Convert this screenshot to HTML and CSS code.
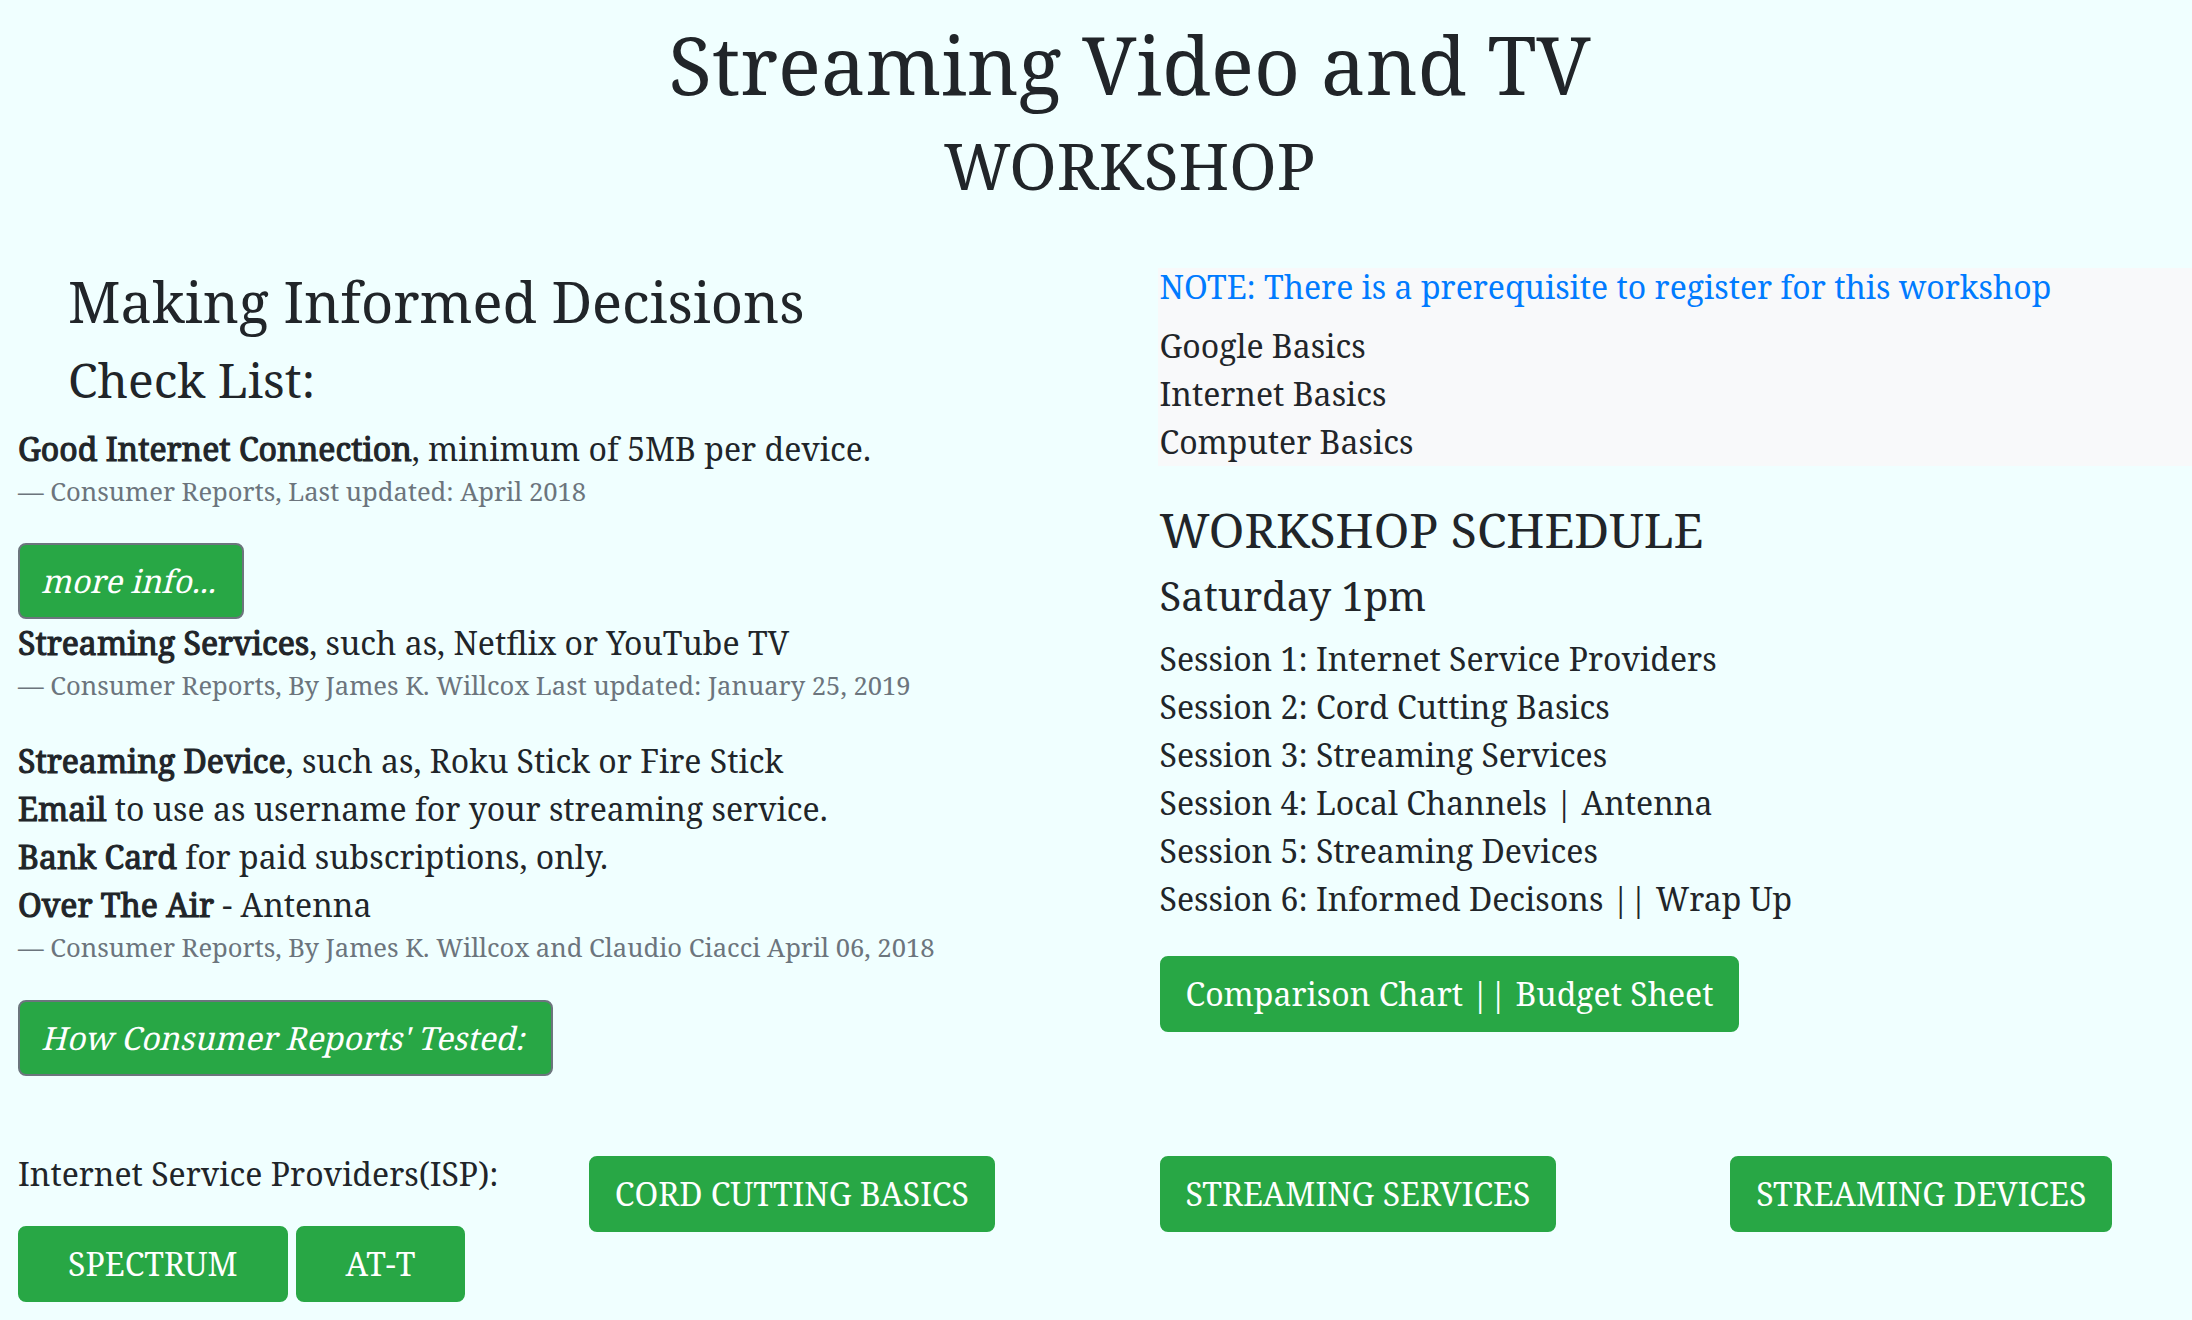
FILE: index.html
```html
<!DOCTYPE html>
<html lang="en">
<head>
<meta charset="utf-8">
<title>Streaming Video and TV Workshop</title>
<link rel="stylesheet" href="styles.css">
</head>
<body>
<div class="page">
  <header class="hero">
    <h1 class="title">Streaming Video and TV</h1>
    <h2 class="subtitle">WORKSHOP</h2>
  </header>

  <div class="cols">
    <section class="col-left">
      <h3 class="heading-lg indent">Making Informed Decisions</h3>
      <h4 class="heading-md indent">Check List:</h4>

      <blockquote class="quote">
        <p><b>Good Internet Connection</b>, minimum of 5MB per device.</p>
        <footer class="quote-footer">— Consumer Reports, Last updated: April 2018</footer>
      </blockquote>

      <div class="btn-row"><a class="btn btn-outlined" href="#"><span class="slant">more info...</span></a></div>

      <blockquote class="quote">
        <p><b>Streaming Services</b>, such as, Netflix or YouTube TV</p>
        <footer class="quote-footer">— Consumer Reports, By James K. Willcox Last updated: January 25, 2019</footer>
      </blockquote>

      <blockquote class="quote">
        <p><b>Streaming Device</b>, such as, Roku Stick or Fire Stick</p>
        <p><b>Email</b> to use as username for your streaming service.</p>
        <p><b>Bank Card</b> for paid subscriptions, only.</p>
        <p><b>Over The Air</b> - Antenna</p>
        <footer class="quote-footer">— Consumer Reports, By James K. Willcox and Claudio Ciacci April 06, 2018</footer>
      </blockquote>

      <div class="btn-row"><a class="btn btn-outlined" href="#"><span class="slant">How Consumer Reports' Tested:</span></a></div>
    </section>

    <section class="col-right">
      <div class="note">
        <h6 class="note-title">NOTE: There is a prerequisite to register for this workshop</h6>
        <p>Google Basics</p>
        <p>Internet Basics</p>
        <p>Computer Basics</p>
      </div>

      <h4 class="schedule-title">WORKSHOP SCHEDULE</h4>
      <h5 class="schedule-day">Saturday 1pm</h5>
      <ul class="sessions">
        <li>Session 1: Internet Service Providers</li>
        <li>Session 2: Cord Cutting Basics</li>
        <li>Session 3: Streaming Services</li>
        <li>Session 4: Local Channels | Antenna</li>
        <li>Session 5: Streaming Devices</li>
        <li>Session 6: Informed Decisons || Wrap Up</li>
      </ul>
      <div class="btn-row"><a class="btn" href="#">Comparison Chart || Budget Sheet</a></div>
    </section>
  </div>

  <div class="links">
    <div class="link-col">
      <p class="isp-label">Internet Service Providers(ISP):</p>
      <div class="btn-row btn-row-gap">
        <a class="btn btn-wide" href="#">SPECTRUM</a>
        <a class="btn btn-wide" href="#">AT-T</a>
      </div>
    </div>
    <div class="link-col link-col-btn"><div class="btn-row"><a class="btn" href="#">CORD CUTTING BASICS</a></div></div>
    <div class="link-col link-col-btn"><div class="btn-row"><a class="btn" href="#">STREAMING SERVICES</a></div></div>
    <div class="link-col link-col-btn"><div class="btn-row"><a class="btn" href="#">STREAMING DEVICES</a></div></div>
  </div>
</div>
</body>
</html>
```

FILE: styles.css
```css
html, body {
  overflow-x: hidden;
}

body {
  margin: 0;
  background: #f0ffff;
  color: #212529;
  font-family: "Noto Serif", "Droid Serif", "DejaVu Serif", serif;
  font-size: 32px;
  line-height: 1.5;
}

.page {
  width: 2223px;
  margin: 16px 0 0 18px;
}

.hero {
  text-align: center;
  margin-bottom: 63px;
}

.title {
  font-size: 80px;
  font-weight: 400;
  line-height: 1.2;
  margin: 0 0 16px;
}

.subtitle {
  font-size: 64px;
  font-weight: 400;
  line-height: 1.2;
  margin: 0 0 16px;
}

.cols {
  display: grid;
  grid-template-columns: 1fr 1fr;
  column-gap: 60px;
  align-items: start;
}

.heading-lg {
  font-size: 56px;
  font-weight: 400;
  line-height: 1.2;
  margin: 0 0 16px;
}

.heading-md {
  font-size: 48px;
  font-weight: 400;
  line-height: 1.2;
  margin: 0 0 16px;
}

.indent {
  padding-left: 50px;
}

.quote {
  margin: 0 0 32px;
}

.quote p {
  margin: 0;
}

.quote b {
  font-weight: 400;
  -webkit-text-stroke: 1.1px currentColor;
}

.quote-footer {
  font-size: 25.6px;
  line-height: 1.5;
  color: #6c757d;
}

.btn-row {
  display: flex;
}

.btn-row-gap {
  gap: 8px;
}

.btn {
  display: inline-block;
  background: #28a745;
  color: #fff;
  border: 2px solid #28a745;
  border-radius: 8px;
  padding: 12px 24px;
  font-size: 32px;
  line-height: 48px;
  text-decoration: none;
  white-space: nowrap;
}

.btn-outlined {
  border-color: #6c757d;
}

.slant {
  display: inline-block;
  transform: skewX(-14deg);
}

.btn-wide {
  padding: 12px 48px;
}

.note {
  background: #f8f9fa;
  margin-left: -2px;
  padding-left: 2px;
}

.note-title {
  color: #007bff;
  font-size: 32px;
  font-weight: 400;
  line-height: 1.2;
  margin: 0 0 16px;
}

.note p {
  margin: 0;
}

.schedule-title {
  font-size: 48px;
  font-weight: 400;
  line-height: 1.2;
  margin: 35px 0 13px;
}

.schedule-day {
  font-size: 40px;
  font-weight: 400;
  line-height: 1.2;
  margin: 0 0 15px;
}

.sessions {
  list-style: none;
  margin: 0 0 33px;
  padding: 0;
}

.links {
  display: grid;
  grid-template-columns: repeat(4, 1fr);
  column-gap: 60px;
  margin-top: 74px;
  align-items: start;
}

.isp-label {
  margin: 0 0 28px;
}

.link-col-btn {
  padding-top: 6px;
}
```
